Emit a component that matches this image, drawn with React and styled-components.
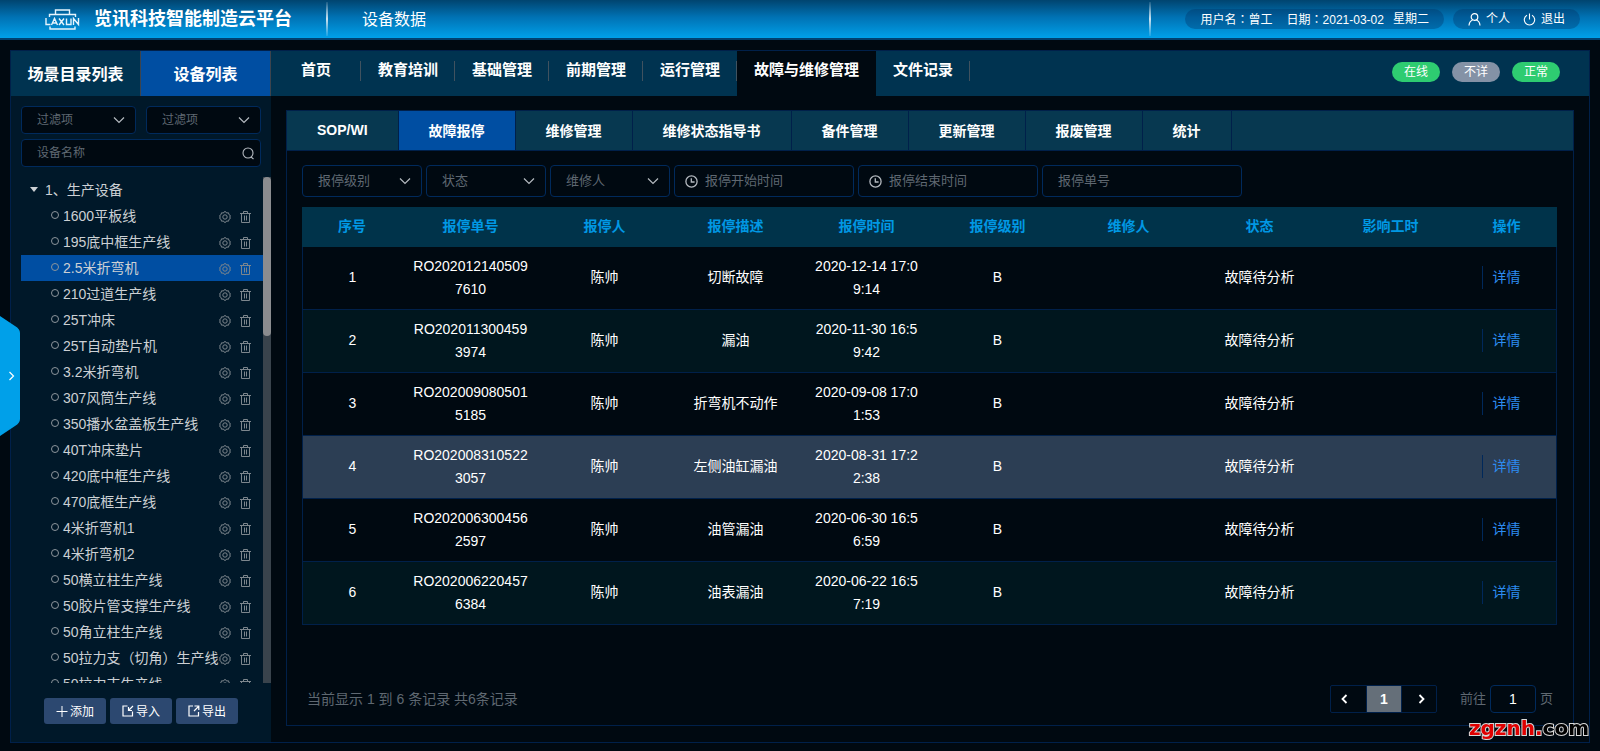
import React, { useState } from "react";
import styled, { createGlobalStyle, css } from "styled-components";

const c = {
  page: "#000911",
  side: "#001829",
  bar: "#003350",
  tab: "#073850",
  active: "#004ea2",
  line: "#00204a",
  field: "#002a5c",
  accent: "#00a0e9",
  muted: "#5f6871",
};

const GlobalStyle = createGlobalStyle`
  *, *::before, *::after { box-sizing: border-box; }
  body {
    margin: 0;
    background: ${c.page};
    color: #fff;
    font-family: "Liberation Sans", "Noto Sans CJK SC", sans-serif;
    font-size: 14px;
  }
  button, input, select { font-family: inherit; font-size: inherit; color: inherit; }
  button { border: 0; padding: 0; background: none; cursor: pointer; }
  a { color: inherit; text-decoration: none; }
  ul { margin: 0; padding: 0; list-style: none; }
`;

/* ---------- icons ---------- */

const Icon = styled.svg`
  display: block;
  flex: none;
  fill: none;
  stroke: currentColor;
  stroke-width: ${(p) => p.$weight || 1};
`;

const Chevron = () => (
  <Icon width="12" height="8" viewBox="0 0 12 8" $weight={1.2}>
    <path d="M1 1.5 6 6.5 11 1.5" />
  </Icon>
);
const SearchIcon = () => (
  <Icon width="13" height="13" viewBox="0 0 13 13" $weight={1.1}>
    <circle cx="6" cy="6" r="5" />
    <path d="M9 10 11.5 12" />
  </Icon>
);
const ClockIcon = () => (
  <Icon width="13" height="13" viewBox="0 0 13 13" $weight={1.3}>
    <circle cx="6.5" cy="6.5" r="5.6" />
    <path d="M6.3 3.2V7H9.6" />
  </Icon>
);
const GearIcon = () => (
  <Icon width="12" height="12" viewBox="0 0 12 12">
    <path d="M4.500 2 5.300 .700H6.700L7.500 2 9.500 1.800 10 3.700 11.500 4.700 10.700 6 11.500 7.300 10 8.300 9.500 10.200 7.500 10 6.700 11.300H5.300L4.500 10 2.500 10.200 2 8.300 .500 7.300 1.300 6 .500 4.700 2 3.700 2.500 1.800Z" />
    <circle cx="6" cy="6" r="2.2" />
  </Icon>
);
const TrashIcon = () => (
  <Icon width="11" height="12" viewBox="0 0 11 12">
    <path d="M0 2.5H11M3.5 2.5V.5H7.5V2.5M1.5 2.5V11.5H9.5V2.5M4.5 4.5V9.5M6.5 4.5V9.5" />
  </Icon>
);
const UserIcon = () => (
  <Icon width="13" height="13" viewBox="0 0 13 13" $weight={1.2}>
    <circle cx="6.5" cy="4" r="3.3" />
    <path d="M1 12.5C1.2 9.5 2.6 7.8 4.6 7M12 12.5C11.8 9.5 10.4 7.8 8.4 7" />
  </Icon>
);
const PowerIcon = () => (
  <Icon width="13" height="13" viewBox="0 0 13 13" $weight={1.1}>
    <path d="M4 2.2A5.2 5.2 0 1 0 9 2.2M6.5.5V6.5" />
  </Icon>
);
const PlusIcon = () => (
  <Icon width="12" height="12" viewBox="0 0 12 12">
    <path d="M.5 6.5H11.5M6 1V12" />
  </Icon>
);
const ImportIcon = () => (
  <Icon width="12" height="12" viewBox="0 0 12 12" $weight={1.2}>
    <path d="M5.5 1H1V11H10.5V6.5M11 1 6.5 5.5M6.5 2V5.5H10" />
  </Icon>
);
const ExportIcon = () => (
  <Icon width="12" height="12" viewBox="0 0 12 12" $weight={1.2}>
    <path d="M5 1H1V11H10.5V7M6 6 10.5 1.5M6.5 1H10.8V5" />
  </Icon>
);
const PageArrow = ({ flip }) => (
  <Icon width="7" height="10" viewBox="0 0 7 10" $weight={1.8}>
    <path d={flip ? "M1.5 1 5.5 5 1.5 9" : "M5.5 1 1.5 5 5.5 9"} />
  </Icon>
);

const LogoSvg = styled.svg`
  display: block;
  flex: none;
  fill: none;
  stroke: #e6f4fc;
  stroke-width: 1.4;
`;
const Logo = () => (
  <LogoSvg width="35" height="21" viewBox="0 0 35 21" aria-label="LAXUN">
    <path d="M10.5 5V1H24.5V5M4.5 8V5.5H30.5V8M5 17.500V20H30V17.5" />
    <path d="M1 9V15.5H5.500M6.500 16 9.500 9.500 12.500 16M8 14H11M14 9.500 19 16M19 9.500 14 16M21.500 9.500V15.500H26V9.500M28.500 16V9.500L33.500 15.500V9" />
  </LogoSvg>
);

/* ---------- page header ---------- */

const Shell = styled.div`
  height: 100vh;
  min-height: 600px;
  display: flex;
  flex-direction: column;
`;
const Header = styled.header`
  flex: none;
  height: 40px;
  display: flex;
  align-items: center;
  padding: 0 20px 0 45px;
  background: linear-gradient(#00446f, #0072b4 45%, ${c.accent});
  border-bottom: 2px solid #00406f;
`;
const Brand = styled.h1`
  margin: 0 34px 0 14px;
  font-size: 18px;
  line-height: 24px;
  font-weight: 700;
`;
const Divider = styled.span`
  width: 2px;
  height: 34px;
  background: linear-gradient(rgba(255, 255, 255, 0.1), rgba(255, 255, 255, 0.8), rgba(255, 255, 255, 0.1));
`;
const Module = styled.span`
  flex: 1;
  padding: 2px 0 0 34px;
  font-size: 16px;
  line-height: 24px;
`;
const Pill = styled.div`
  height: 20px;
  display: flex;
  align-items: center;
  margin-left: ${(p) => p.$before}px;
  padding: 0 15px;
  border-radius: 10px;
  background: rgba(0, 50, 100, 0.35);
  font-size: 12px;
  line-height: 20px;
  white-space: nowrap;
`;
const PillText = styled.span`
  margin-right: ${(p) => p.$after || 0}px;
`;
const Colon = styled.span`
  font-family: "Noto Sans CJK TC", sans-serif;
`;
const PillLink = styled.a`
  display: flex;
  align-items: center;
  gap: 5px;
  & + & { margin-left: 13px; }
`;

/* ---------- frame ---------- */

const Frame = styled.main`
  flex: 1;
  min-height: 0;
  display: flex;
  margin: 10px 10px 8px;
  border: 1px solid ${c.line};
`;
const Sidebar = styled.aside`
  flex: none;
  width: 260px;
  display: flex;
  flex-direction: column;
  background: ${c.side};
`;
const SideTabs = styled.div`
  flex: none;
  display: flex;
`;
const SideTab = styled.button`
  flex: 1;
  height: 45px;
  padding-bottom: 2px;
  border-right: 1px solid #3d444d;
  background: ${(p) => (p.$on ? c.active : c.bar)};
  font-size: 16px;
  font-weight: 700;
`;
const SideFilters = styled.div`
  display: grid;
  grid-template-columns: 1fr 1fr;
  gap: 5px 10px;
  padding: 10px 10px 0;
`;

const Field = styled.div`
  position: relative;
  display: flex;
  align-items: center;
  height: ${(p) => (p.$small ? 28 : 32)}px;
  width: ${(p) => (p.$width ? `${p.$width}px` : "auto")};
  font-size: ${(p) => (p.$small ? 12 : 13)}px;
  border: 1px solid ${c.field};
  border-radius: 4px;
  background: ${c.page};
  color: #b4bac0;
  ${(p) => p.$full && css`grid-column: 1 / -1;`}
`;
const fieldControl = css`
  flex: 1;
  min-width: 0;
  width: 100%;
  height: 100%;
  padding: 0 15px 1px;
  border: 0;
  outline: 0;
  background: transparent;
  color: ${c.muted};
  &::placeholder { color: ${c.muted}; opacity: 1; }
`;
const Select = styled.select`
  ${fieldControl}
  appearance: none;
`;
const Input = styled.input`
  ${fieldControl}
  padding-left: ${(p) => (p.$icon ? 7 : 15)}px;
`;
const Lead = styled.span`
  margin-left: 10px;
`;
const Trail = styled.span`
  position: absolute;
  right: ${(p) => p.$right || 10}px;
  pointer-events: none;
`;

const SelectField = ({ label, ...rest }) => (
  <Field {...rest}>
    <Select aria-label={label} defaultValue="">
      <option value="">{label}</option>
    </Select>
    <Trail><Chevron /></Trail>
  </Field>
);

/* ---------- device tree ---------- */

const TreeArea = styled.div`
  flex: 1;
  min-height: 0;
  display: flex;
  margin: 10px 0 0 10px;
`;
const TreeScroll = styled.div`
  flex: 1;
  min-width: 0;
  overflow-y: auto;
  scrollbar-width: none;
  color: #ccd0d4;
`;
const Track = styled.div`
  flex: none;
  width: 8px;
  background: #39434c;
`;
const Thumb = styled.div`
  height: 159px;
  border-radius: 4px;
  background: #8b8c8f;
`;
const TreeRoot = styled.button`
  width: 100%;
  height: 26px;
  display: flex;
  align-items: center;
  gap: 7px;
  padding: 0 0 2px 9px;
`;
const Caret = styled.span`
  border: 4px solid transparent;
  border-top: 5px solid currentColor;
  border-bottom: 0;
`;
const TreeRow = styled.li`
  height: 26px;
  display: flex;
  align-items: center;
  padding: 0 12px 0 30px;
  background: ${(p) => (p.$on ? c.active : "transparent")};
`;
const TreeName = styled.button`
  flex: 1;
  width: 0;
  display: flex;
  align-items: center;
  gap: 4px;
  line-height: 26px;
  white-space: nowrap;
`;
const Dot = styled.span`
  flex: none;
  width: 8px;
  height: 8px;
  margin-bottom: 3px;
  border: 1px solid #8d959c;
  border-radius: 50%;
`;
const RowAction = styled.button`
  margin-left: ${(p) => p.$gap || 0}px;
  padding-top: 1px;
  color: #7d868d;
`;
const SideActions = styled.div`
  flex: none;
  display: flex;
  align-items: center;
  gap: 4px;
  padding: 15px 0 18px 33px;
`;
const SideButton = styled.button`
  height: 26px;
  width: 62px;
  display: flex;
  align-items: center;
  justify-content: center;
  gap: 2px;
  padding-bottom: 1px;
  border-radius: 3px;
  background: #2c4870;
  font-size: 12px;
`;

/* ---------- workspace ---------- */

const Workspace = styled.div`
  flex: 1;
  min-width: 0;
  display: flex;
  flex-direction: column;
`;
const TopNav = styled.nav`
  flex: none;
  height: 45px;
  display: flex;
  background: ${c.bar};
`;
const NavItem = styled.a`
  display: flex;
  align-items: flex-start;
  padding: 10px 0 0 ${(p) => (p.$wide ? 30 : 17)}px;
  background: ${(p) => (p.$on ? c.page : "transparent")};
  font-size: 15px;
  line-height: 17px;
  font-weight: 700;
  white-space: nowrap;
  &::after {
    content: "";
    width: 1px;
    height: 20px;
    margin-left: ${(p) => (p.$wide ? 29 : 16)}px;
    background: ${(p) => (p.$on ? "transparent" : "#40525f")};
  }
`;
const Badges = styled.div`
  margin-left: auto;
  display: flex;
  gap: 12px;
  padding: 11px 29px 0 0;
`;
const Badge = styled.span`
  width: 48px;
  height: 20px;
  border-radius: 10px;
  background: ${(p) => (p.$ok ? "#2ecc71" : "#8492a6")};
  font-size: 12px;
  line-height: 20px;
  text-align: center;
`;
const Panel = styled.section`
  flex: 1;
  min-height: 0;
  display: flex;
  flex-direction: column;
  margin: 14px 15px 16px;
  border: 1px solid ${c.line};
`;
const Tabs = styled.div`
  flex: none;
  display: flex;
  height: 40px;
  background: ${c.tab};
  border-bottom: 1px solid ${c.line};
`;
const Tab = styled.button`
  padding: 0 30px 2px;
  border-right: 1px solid ${c.line};
  background: ${(p) => (p.$on ? c.active : "transparent")};
  font-weight: 700;
  white-space: nowrap;
`;
const PanelBody = styled.div`
  flex: 1;
  min-height: 0;
  display: flex;
  flex-direction: column;
  padding: 14px 16px 12px 15px;
`;
const FilterBar = styled.div`
  display: flex;
  gap: 4px;
  margin-bottom: 10px;
`;
const Table = styled.table`
  width: 100%;
  table-layout: fixed;
  border-collapse: separate;
  border-spacing: 0;
  line-height: 23px;
  text-align: center;
`;
const Col = styled.col`
  width: ${(p) => (p.$width ? `${p.$width}px` : "auto")};
`;
const Th = styled.th`
  height: 40px;
  padding: 0 11px 2px;
  background: #00334a;
  color: #0098e4;
  font-weight: 700;
`;
const Tr = styled.tr`
  background: ${(p) => (p.$tone === "hover" ? "#2c3e54" : p.$tone === "even" ? "#00161e" : "transparent")};
`;
const Td = styled.td`
  height: 63px;
  padding: 0 11px 1px;
  border-bottom: 1px solid ${c.line};
  word-break: break-all;
  &:first-child { border-left: 1px solid ${c.line}; }
  &:last-child { border-right: 1px solid ${c.line}; }
`;
const DetailLink = styled.a`
  display: inline-block;
  padding: 0 10px;
  border-left: 1px solid #00285a;
  color: #2d8cf0;
`;
const PanelFoot = styled.footer`
  margin-top: auto;
  display: flex;
  align-items: center;
  padding: 0 4px 0 5px;
  color: ${c.muted};
`;
const FootText = styled.span`
  padding-bottom: 3px;
`;
const Pager = styled.div`
  display: flex;
  height: 28px;
  margin: 0 23px 0 auto;
  border: 1px solid ${c.line};
  border-radius: 2px;
`;
const PageButton = styled.button`
  width: 35px;
  display: flex;
  align-items: center;
  justify-content: center;
  padding: 0 ${(p) => (p.$first ? 8 : 0)}px 0 ${(p) => (p.$last ? 5 : 0)}px;
  border-left: ${(p) => (p.$first ? 0 : 1)}px solid ${c.line};
  background: ${(p) => (p.$on ? "#656f79" : "transparent")};
  color: #fff;
  font-weight: 700;
`;
const Jump = styled.label`
  display: flex;
  align-items: center;
  gap: 4px;
  font-size: 13px;
`;
const JumpInput = styled.input`
  width: 46px;
  height: 28px;
  padding: 0;
  border: 1px solid ${c.field};
  border-radius: 4px;
  background: transparent;
  color: #fff;
  font-size: 14px;
  text-align: center;
`;

/* ---------- overlays ---------- */

const Drawer = styled.button`
  position: fixed;
  left: 0;
  top: calc(50% - 60px);
  width: 20px;
  height: 120px;
`;
const DrawerIcon = () => (
  <svg width="20" height="120" viewBox="0 0 20 120">
    <path d="M0 0 15 10Q20 13 20 17V103Q20 107 15 110L0 120Z" fill={c.accent} />
    <path d="M9.5 56 13.5 60 9.5 64" fill="none" stroke="#fff" strokeWidth="1.2" />
  </svg>
);
const Watermark = styled.div`
  position: fixed;
  right: 11px;
  bottom: 12px;
  color: #000;
  font: 700 20px/22px "DejaVu Sans", sans-serif;
  -webkit-text-stroke: 2px #d8d8d8;
  paint-order: stroke fill;
`;
const WatermarkName = styled.span`
  color: #e00000;
`;

const devices = [
  "1600平板线", "195底中框生产线", "2.5米折弯机", "210过道生产线", "25T冲床",
  "25T自动垫片机", "3.2米折弯机", "307风筒生产线", "350播水盆盖板生产线", "40T冲床垫片",
  "420底中框生产线", "470底框生产线", "4米折弯机1", "4米折弯机2", "50横立柱生产线",
  "50胶片管支撑生产线", "50角立柱生产线", "50拉力支（切角）生产线", "50拉力支生产线",
];
const nav = ["首页", "教育培训", "基础管理", "前期管理", "运行管理", "故障与维修管理", "文件记录"];
const tabs = ["SOP/WI", "故障报停", "维修管理", "维修状态指导书", "备件管理", "更新管理", "报废管理", "统计"];
const columns = ["序号", "报停单号", "报停人", "报停描述", "报停时间", "报停级别", "维修人", "状态", "影响工时", "操作"];
const widths = [100, 137, 0, 0, 0, 0, 0, 0, 0, 101];
const orders = [
  ["RO2020121405097610", "切断故障", "2020-12-14 17:09:14"],
  ["RO2020113004593974", "漏油", "2020-11-30 16:59:42"],
  ["RO2020090805015185", "折弯机不动作", "2020-09-08 17:01:53"],
  ["RO2020083105223057", "左侧油缸漏油", "2020-08-31 17:22:38"],
  ["RO2020063004562597", "油管漏油", "2020-06-30 16:56:59"],
  ["RO2020062204576384", "油表漏油", "2020-06-22 16:57:19"],
];

function DeviceTree() {
  const [offset, setOffset] = useState(0);
  const [current, setCurrent] = useState(2);
  const onScroll = (e) => {
    const el = e.currentTarget;
    const range = el.scrollHeight - el.clientHeight;
    setOffset(range > 0 ? (el.scrollTop / range) * (el.clientHeight - 159) : 0);
  };
  return (
    <TreeArea>
      <TreeScroll onScroll={onScroll}>
        <TreeRoot><Caret />1、生产设备</TreeRoot>
        <ul>
          {devices.map((name, i) => (
            <TreeRow key={name} $on={i === current}>
              <TreeName onClick={() => setCurrent(i)}><Dot />{name}</TreeName>
              <RowAction aria-label="设置"><GearIcon /></RowAction>
              <RowAction aria-label="删除" $gap={9}><TrashIcon /></RowAction>
            </TreeRow>
          ))}
        </ul>
      </TreeScroll>
      <Track><Thumb style={{ transform: `translateY(${offset}px)` }} /></Track>
    </TreeArea>
  );
}

function OrderTable() {
  return (
    <Table>
      <colgroup>{widths.map((w, i) => <Col key={i} $width={w} />)}</colgroup>
      <thead>
        <tr>{columns.map((name) => <Th key={name} scope="col">{name}</Th>)}</tr>
      </thead>
      <tbody>
        {orders.map(([id, note, time], i) => (
          <Tr key={id} $tone={i === 3 ? "hover" : i % 2 ? "even" : "odd"}>
            <Td>{i + 1}</Td>
            <Td>{id}</Td>
            <Td>陈帅</Td>
            <Td>{note}</Td>
            <Td>{time}</Td>
            <Td>B</Td>
            <Td />
            <Td>故障待分析</Td>
            <Td />
            <Td><DetailLink href="#detail">详情</DetailLink></Td>
          </Tr>
        ))}
      </tbody>
    </Table>
  );
}

export default function App() {
  return (
    <Shell>
      <GlobalStyle />
      <Header>
        <Logo />
        <Brand>览讯科技智能制造云平台</Brand>
        <Divider />
        <Module>设备数据</Module>
        <Divider />
        <Pill $before={34}>
          <PillText $after={14}>用户名<Colon>：</Colon>曾工</PillText>
          <PillText $after={9}>日期<Colon>：</Colon>2021-03-02</PillText>
          <PillText>星期二</PillText>
        </Pill>
        <Pill $before={9}>
          <PillLink href="#me"><UserIcon />个人</PillLink>
          <PillLink href="#exit"><PowerIcon />退出</PillLink>
        </Pill>
      </Header>

      <Frame>
        <Sidebar>
          <SideTabs>
            <SideTab>场景目录列表</SideTab>
            <SideTab $on>设备列表</SideTab>
          </SideTabs>
          <SideFilters>
            <SelectField $small label="过滤项" />
            <SelectField $small label="过滤项" />
            <Field $small $full>
              <Input aria-label="设备名称" placeholder="设备名称" />
              <Trail $right={5}><SearchIcon /></Trail>
            </Field>
          </SideFilters>
          <DeviceTree />
          <SideActions>
            <SideButton><PlusIcon />添加</SideButton>
            <SideButton><ImportIcon />导入</SideButton>
            <SideButton><ExportIcon />导出</SideButton>
          </SideActions>
        </Sidebar>

        <Workspace>
          <TopNav>
            {nav.map((name, i) => (
              <NavItem key={name} href="#nav" $wide={i === 0} $on={i === 5}>{name}</NavItem>
            ))}
            <Badges>
              <Badge $ok>在线</Badge>
              <Badge>不详</Badge>
              <Badge $ok>正常</Badge>
            </Badges>
          </TopNav>
          <Panel>
            <Tabs>
              {tabs.map((name, i) => <Tab key={name} $on={i === 1}>{name}</Tab>)}
            </Tabs>
            <PanelBody>
              <FilterBar>
                <SelectField $width={120} label="报停级别" />
                <SelectField $width={120} label="状态" />
                <SelectField $width={120} label="维修人" />
                {["报停开始时间", "报停结束时间"].map((label) => (
                  <Field key={label} $width={180}>
                    <Lead><ClockIcon /></Lead>
                    <Input $icon aria-label={label} placeholder={label} />
                  </Field>
                ))}
                <Field $width={200}>
                  <Input aria-label="报停单号" placeholder="报停单号" />
                </Field>
              </FilterBar>
              <OrderTable />
              <PanelFoot>
                <FootText>当前显示 1 到 6 条记录 共6条记录</FootText>
                <Pager>
                  <PageButton $first aria-label="上一页"><PageArrow /></PageButton>
                  <PageButton $on>1</PageButton>
                  <PageButton $last aria-label="下一页"><PageArrow flip /></PageButton>
                </Pager>
                <Jump>
                  <FootText>前往</FootText>
                  <JumpInput defaultValue="1" />
                  <FootText>页</FootText>
                </Jump>
              </PanelFoot>
            </PanelBody>
          </Panel>
        </Workspace>
      </Frame>

      <Drawer aria-label="展开"><DrawerIcon /></Drawer>
      <Watermark><WatermarkName>zgznh.</WatermarkName>com</Watermark>
    </Shell>
  );
}
